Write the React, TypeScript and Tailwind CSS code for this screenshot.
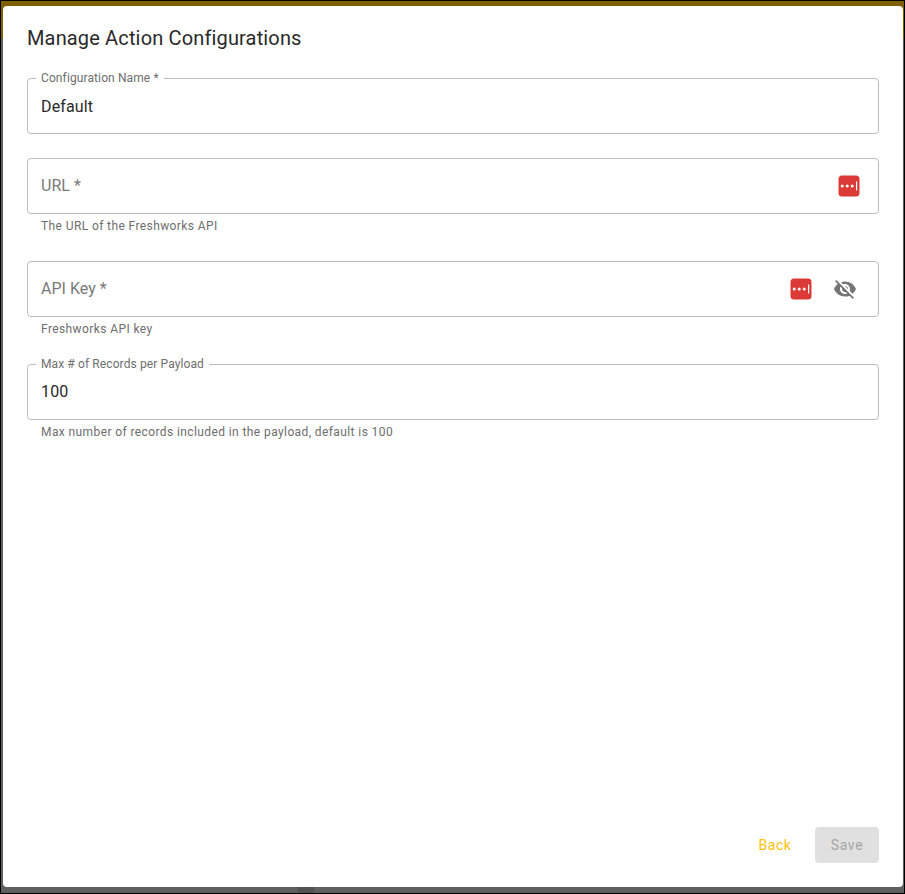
import React from 'react';

const PasswordBadge = () => (
  <svg width="22" height="22" viewBox="0 0 22 22" className="block">
    <rect x="0.5" y="0.5" width="21" height="21" rx="3.5" fill="#dc3a36" />
    <circle cx="4.2" cy="11" r="1.5" fill="#fff" />
    <circle cx="9.2" cy="11" r="1.5" fill="#fff" />
    <circle cx="14.2" cy="11" r="1.5" fill="#fff" />
    <rect x="18" y="6.5" width="1.2" height="9" fill="#fff" />
  </svg>
);

const EyeOff = () => (
  <svg width="24" height="24" viewBox="0 0 24 24" fill="#757575" className="block">
    <path d="M12 7c2.76 0 5 2.24 5 5 0 .65-.13 1.26-.36 1.83l2.92 2.92c1.51-1.26 2.7-2.89 3.43-4.75-1.73-4.39-6-7.5-11-7.5-1.4 0-2.74.25-3.98.7l2.16 2.16C10.74 7.13 11.35 7 12 7zM2 4.27l2.28 2.28.46.46C3.08 8.3 1.78 10.02 1 12c1.73 4.39 6 7.5 11 7.5 1.55 0 3.03-.3 4.38-.84l.42.42L19.73 22 21 20.73 3.27 3 2 4.27zM7.53 9.8l1.55 1.55c-.05.21-.08.43-.08.65 0 1.66 1.34 3 3 3 .22 0 .44-.03.65-.08l1.55 1.55c-.67.33-1.41.53-2.2.53-2.76 0-5-2.24-5-5 0-.79.2-1.53.53-2.2zm4.31-.78l3.15 3.15.02-.16c0-1.66-1.34-3-3-3l-.17.01z" />
  </svg>
);

type FieldProps = {
  label: string;
  value?: string;
  helper?: string;
  valueClass?: string;
  children?: React.ReactNode;
};

const Field = ({ label, value, helper, valueClass, children }: FieldProps) => (
  <div className="flex flex-col">
    <div className="relative h-14 flex items-center justify-between rounded border border-[#bdbdbd] pl-[13px] pr-[18px]">
      {value ? (
        <>
          <span className="absolute -top-[8px] left-[8px] bg-white px-[5px] text-xs leading-[15px] tracking-[0.11px] text-[#6e6e6e]">{label}</span>
          <span className={`text-base tracking-[0.15px] text-[#2a2a2a] ${valueClass ?? ''}`}>{value}</span>
        </>
      ) : (
        <span className="text-base tracking-[0.02px] text-[#7a7a7a]">{label}</span>
      )}
      {children}
    </div>
    {helper && <p className="mt-[5px] pl-[14px] text-xs leading-[15px] tracking-[0.4px] text-[#6e6e6e]">{helper}</p>}
  </div>
);

export default function App() {
  return (
    <div className="flex h-[894px] w-[905px] flex-col border border-black bg-[linear-gradient(#7f6000_37px,#5f5f5f_37px)] font-['Roboto',sans-serif]">
      <div className="h-[5px] shrink-0" />
      <div className="ml-[2px] mr-[1px] flex h-[881px] shrink-0 flex-col rounded bg-white px-6 pt-[18px] pb-6">
        <h1 className="mb-[26px] text-xl leading-7 font-normal tracking-[0.15px] text-[#2a2a2a]">Manage Action Configurations</h1>
        <div className="flex flex-col">
          <div className="mb-6">
            <Field label="Configuration Name *" value="Default" valueClass="pt-[1px]" />
          </div>
          <div className="mb-[27px]">
            <Field label="URL *" helper="The URL of the Freshworks API">
              <PasswordBadge />
            </Field>
          </div>
          <div className="mb-[27px]">
            <Field label="API Key *" helper="Freshworks API key">
              <div className="mr-[3px] flex items-center gap-[21px]">
                <PasswordBadge />
                <EyeOff />
              </div>
            </Field>
          </div>
          <Field label="Max # of Records per Payload" value="100" helper="Max number of records included in the payload, default is 100" />
        </div>
        <div className="mt-auto flex items-center justify-end gap-4">
          <button className="h-9 w-12 text-sm font-normal tracking-[0.6px] text-[#ffc107]">Back</button>
          <button className="h-9 w-16 rounded bg-[#e0e0e0] text-sm font-normal tracking-[0.6px] text-[#a6a6a6]">Save</button>
        </div>
      </div>
      <div className="h-[6px] shrink-0 pl-[297px]">
        <div className="h-full w-4 bg-[#525252]" />
      </div>
    </div>
  );
}
